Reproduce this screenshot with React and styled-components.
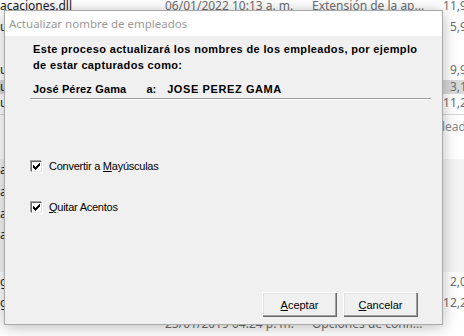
import React from "react";
import styled, { createGlobalStyle } from "styled-components";

const GlobalStyle = createGlobalStyle`
  html, body {
    margin: 0;
    padding: 0;
    background: #ffffff;
    overflow: hidden;
  }
`;

const Stage = styled.div`
  position: relative;
  width: 464px;
  height: 336px;
  overflow: hidden;
  background: #ffffff;
  font-family: "Noto Sans", "Liberation Sans", sans-serif;
`;

// explorer list behind the dialog
const FileList = styled.div`
  display: flex;
  flex-direction: column;
  width: 520px;
  margin-top: -4px;
`;

const FileRow = styled.div`
  display: grid;
  grid-template-columns: 165px 147px 125px 62px;
  height: ${(p) => p.$h}px;
  line-height: ${(p) => p.$h}px;
  font-size: 12px;
  white-space: nowrap;
  background: ${(p) => (p.$selected ? "#d9d9d9" : p.$shade ? "#f4f4f4" : "transparent")};
`;

const Name = styled.span`
  color: #1a1a1a;
  overflow: hidden;
`;

const Meta = styled.span`
  color: #6d6d6d;
  overflow: hidden;
`;

const Size = styled.span`
  color: #6d6d6d;
  text-align: right;
`;

const Divider = styled.div`
  height: 1px;
  margin: 2px 0 0;
  background: #d5d5d5;
`;

const GroupRow = styled.div`
  height: 24px;
  line-height: 24px;
  padding-left: 442px;
  font-size: 12px;
  color: #8a8a8a;
  white-space: nowrap;
`;

// dialog window
const Dialog = styled.div`
  position: absolute;
  left: 4px;
  top: 10px;
  width: 437px;
  height: 313px;
  border: 1px solid #a9a9a9;
  background: #f0f0f0;
  display: flex;
  flex-direction: column;
  box-shadow: 0 2px 14px rgba(0, 0, 0, 0.28);
`;

const TitleBar = styled.div`
  height: 25px;
  line-height: 25px;
  background: #ffffff;
  padding-left: 4px;
  font-family: "Noto Sans", sans-serif;
  font-size: 11.5px;
  color: #9a9a9a;
`;

const Body = styled.div`
  flex: 1;
  display: flex;
  flex-direction: column;
  padding: 5px 0 7px 25px;
  font-family: "Liberation Sans", Arial, sans-serif;
  font-size: 11px;
  color: #000000;
`;

const Message = styled.div`
  padding-left: 3px;
  font-weight: bold;
  line-height: 16px;
  letter-spacing: 0.35px;
`;

const Example = styled.div`
  display: flex;
  margin-top: 8px;
  padding-left: 3px;
  font-weight: bold;
  line-height: 16px;
`;

const Part = styled.span`
  margin-left: ${(p) => p.$gap || 0}px;
  letter-spacing: ${(p) => p.$ls || 0}px;
`;

const Rule = styled.div`
  width: 401px;
  height: 1px;
  margin-top: 1px;
  background: #a0a0a0;
  border-bottom: 1px solid #ffffff;
`;

const Options = styled.div`
  display: flex;
  flex-direction: column;
  gap: 28px;
  margin-top: 60px;
`;

const CheckRow = styled.label`
  display: flex;
  align-items: center;
  gap: 6px;
  height: 13px;
  line-height: 13px;
  letter-spacing: -0.25px;
`;

const Box = styled.span`
  width: 9px;
  height: 9px;
  display: flex;
  align-items: center;
  justify-content: center;
  background: #ffffff;
  border-style: solid;
  border-width: 1px;
  border-color: #696969 #e3e3e3 #e3e3e3 #696969;
  box-shadow: -1px -1px 0 #a0a0a0, 1px 1px 0 #ffffff;
  margin: 1px;
`;

const Key = styled.span`
  text-decoration: underline;
`;

const Buttons = styled.div`
  display: flex;
  justify-content: flex-end;
  gap: 6px;
  margin-top: auto;
  padding-right: 24px;
`;

const Button = styled.button`
  width: 75px;
  height: 25px;
  padding: 0;
  background: #f0f0f0;
  border: none;
  font-family: "Liberation Sans", Arial, sans-serif;
  font-size: 11px;
  color: #000000;
  box-shadow: inset 1px 1px 0 #ffffff, inset -1px -1px 0 #696969,
    inset -2px -2px 0 #a0a0a0, inset 2px 2px 0 #e3e3e3;
`;

const Check = () => (
  <svg width="7" height="7" viewBox="0 0 7 7" shapeRendering="crispEdges">
    <path
      d="M6 0h1v3h-1v1h-1v1h-1v1h-1v1h-1v-1h-1v-1h-1v-3h1v1h1v1h1v-1h1v-1h1z"
      fill="#000"
    />
  </svg>
);

const files = [
  { h: 20, name: "acaciones.dll", date: "06/01/2022 10:13 a. m.", type: "Extensión de la ap...", size: "11,912 KB" },
  { h: 22, name: "ulario.dll", size: "5,904 KB" },
  { h: 22, name: "" },
  { h: 20, name: "ulta.dll", size: "9,916 KB" },
  { h: 14, name: "ulos.dll", size: "3,128 KB", selected: true },
  { h: 18, name: "ulador.dll", size: "11,204 KB" },
];

const lower = [
  { h: 20, name: "" },
  { h: 22, name: "aZ", shade: true },
  { h: 22, name: "aZ", shade: true },
  { h: 22, name: "aZ", shade: true },
  { h: 20, name: "aZ", shade: true },
  { h: 27, name: "", shade: true },
  { h: 20, name: "gastos.dll", size: "2,040 KB" },
  { h: 21, name: "gestion.dll", size: "12,260 KB" },
  { h: 22, name: "", date: "23/01/2019 04:24 p. m.", type: "Opciones de confi..." },
];

const Row = ({ f }) => (
  <FileRow $h={f.h} $selected={f.selected} $shade={f.shade}>
    <Name>{f.name}</Name>
    <Meta>{f.date}</Meta>
    <Meta>{f.type}</Meta>
    <Size>{f.size}</Size>
  </FileRow>
);

export default function App() {
  return (
    <Stage>
      <GlobalStyle />
      <FileList>
        {files.map((f, i) => (
          <Row key={i} f={f} />
        ))}
        <Divider />
        <GroupRow>leadme</GroupRow>
        {lower.map((f, i) => (
          <Row key={"l" + i} f={f} />
        ))}
      </FileList>

      <Dialog>
        <TitleBar>Actualizar nombre de empleados</TitleBar>
        <Body>
          <Message>
            Este proceso actualizará los nombres de los empleados, por ejemplo
            <br />
            de estar capturados como:
          </Message>
          <Example>
            <Part $ls={0.15}>José Pérez Gama</Part>
            <Part $gap={20}>a:</Part>
            <Part $gap={11} $ls={0.6}>
              JOSE PEREZ GAMA
            </Part>
          </Example>
          <Rule />
          <Options>
            <CheckRow>
              <Box>
                <Check />
              </Box>
              <span>
                Convertir a <Key>M</Key>ayúsculas
              </span>
            </CheckRow>
            <CheckRow>
              <Box>
                <Check />
              </Box>
              <span>
                <Key>Q</Key>uitar Acentos
              </span>
            </CheckRow>
          </Options>
          <Buttons>
            <Button>
              <Key>A</Key>ceptar
            </Button>
            <Button>
              <Key>C</Key>ancelar
            </Button>
          </Buttons>
        </Body>
      </Dialog>
    </Stage>
  );
}
